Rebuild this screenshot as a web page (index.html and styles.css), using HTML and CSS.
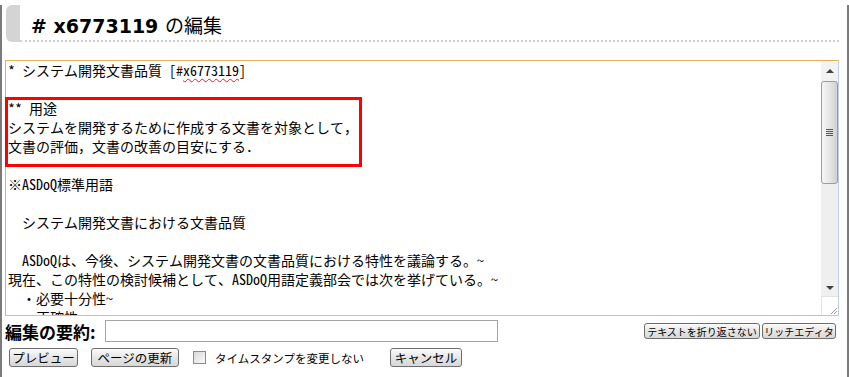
FILE: index.html
```html
<!DOCTYPE html>
<html>
<head>
    <title>x6773119 の編集</title>
    <link rel="stylesheet" href="styles.css">
</head>
<body>
    <div class="page">
        <h2 class="title">
            <span class="tab"></span>
            <span class="title-text"># x6773119 <span class="title-jp">の編集</span></span>
        </h2>

        <div class="editor">
            <div class="source">* システム開発文書品質 [#<span class="misspelled">x6773119</span>]

** 用途
システムを開発するために作成する文書を対象として，
文書の評価，文書の改善の目安にする．

※ASDoQ標準用語

  システム開発文書における文書品質

  ASDoQは、今後、システム開発文書の文書品質における特性を議論する。~
現在、この特性の検討候補として、ASDoQ用語定義部会では次を挙げている。~
  ・必要十分性~
  ・正確性~
  ・理解容易性~</div>
            <div class="scrollbar">
                <div class="sb-btn sb-up"><span class="arrow-up"></span></div>
                <div class="sb-thumb"><span class="grip"></span></div>
                <div class="sb-track"></div>
                <div class="sb-btn sb-down"><span class="arrow-down"></span></div>
                <div class="sb-corner">
                    <svg width="17" height="18" viewBox="0 0 17 18">
                        <path d="M15 10 L9 16 M15 13 L12 16" stroke="#9a9a9a" stroke-width="1"/>
                    </svg>
                </div>
            </div>
            <div class="highlight"></div>
        </div>

        <div class="summary-row">
            <label class="summary-label">編集の要約:</label>
            <input class="summary-input" type="text">
            <div class="tools">
                <button class="btn btn-small btn-wrap">テキストを折り返さない</button>
                <button class="btn btn-small btn-rich">リッチエディタ</button>
            </div>
        </div>

        <div class="action-row">
            <button class="btn btn-preview">プレビュー</button>
            <button class="btn btn-update">ページの更新</button>
            <span class="check"></span>
            <span class="check-label">タイムスタンプを変更しない</span>
            <button class="btn btn-cancel">キャンセル</button>
        </div>
    </div>
</body>
</html>
```

FILE: styles.css
```css
body {
    margin: 0;
    background: #fff;
    font-family: "Noto Sans CJK JP", sans-serif;
    color: #000;
}
.page {
    box-sizing: border-box;
    height: 377px;
    width: 849px;
    border-left: 2px solid #7a7a7a;
    border-right: 2px solid #7a7a7a;
    border-bottom: 2px solid #7a7a7a;
    padding: 0 8px 0 3px;
}
.title {
    display: flex;
    margin: 5px 0 0 1px;
    height: 37px;
    font-weight: normal;
    font-size: 19px;
}
.tab {
    width: 14px;
    height: 37px;
    background: #d4d4d4;
    border-radius: 6px 0 0 6px;
}
.title-text {
    flex: 1;
    box-sizing: border-box;
    padding: 4px 0 0 11px;
    line-height: 31px;
    border-bottom: 2px dotted #cfcfcf;
    font-family: "DejaVu Sans", Verdana, sans-serif;
    font-weight: bold;
    color: #000;
}
.title-jp {
    font-family: "Noto Sans CJK JP", sans-serif;
    font-weight: normal;
    font-size: 19px;
}
.editor {
    position: relative;
    display: flex;
    margin-top: 18px;
    height: 256px;
    box-sizing: border-box;
    border: 1px solid;
    border-color: #e2b35a #bccde6 #cbc3ab #d8b46c;
    background: #fff;
}
.source {
    flex: 1;
    overflow: hidden;
    white-space: pre;
    padding: 0 2px;
    font-family: "Noto Sans Mono CJK JP", "Noto Sans CJK JP", monospace;
    font-size: 14px;
    line-height: 19px;
}
.misspelled {
    text-decoration: underline wavy #e02020;
    text-decoration-thickness: 1px;
    text-underline-offset: 2px;
}
.highlight {
    position: absolute;
    left: -1px;
    top: 36px;
    width: 351px;
    height: 64px;
    border: 3px solid #ff0000;
}
.scrollbar {
    width: 17px;
    display: flex;
    flex-direction: column;
    background: #f0f0f0;
}
.sb-btn {
    display: flex;
    align-items: center;
    justify-content: center;
}
.sb-up {
    height: 20px;
    background: #f3f3f3;
}
.sb-down {
    height: 17px;
    background: #f0f0f0;
}
.arrow-up {
    border-left: 4px solid transparent;
    border-right: 4px solid transparent;
    border-bottom: 4px solid #404040;
}
.arrow-down {
    border-left: 4px solid transparent;
    border-right: 4px solid transparent;
    border-top: 4px solid #404040;
}
.sb-thumb {
    height: 103px;
    box-sizing: border-box;
    border: 1px solid #9c9c9c;
    border-radius: 3px;
    background: linear-gradient(to right, #f6f6f6, #e2e2e2 60%, #d0d0d0);
    display: flex;
    align-items: center;
    justify-content: center;
}
.grip {
    width: 7px;
    height: 7px;
    background: repeating-linear-gradient(to bottom, #555 0 1px, transparent 1px 2px);
}
.sb-track {
    flex: 1;
    background: #efefef;
}
.sb-corner {
    height: 18px;
    background: #fff;
    border-top: 1px solid #e2e2e2;
    border-left: 1px solid #e2e2e2;
}
.summary-row {
    display: flex;
    align-items: center;
    margin-top: 4px;
    height: 22px;
}
.summary-label {
    font-size: 17px;
    font-weight: bold;
    margin-right: 9px;
}
.summary-input {
    width: 393px;
    height: 22px;
    box-sizing: border-box;
    border: 1px solid #a5a5a5;
    margin: 0;
}
.tools {
    margin-left: auto;
    margin-right: 3px;
    display: flex;
    gap: 2px;
}
.btn {
    font-family: "Noto Sans CJK JP", sans-serif;
    font-size: 12.5px;
    line-height: 15px;
    height: 19px;
    padding: 0;
    border: 1px solid #6e6e6e;
    border-radius: 3px;
    background: linear-gradient(to bottom, #fbfbfb, #e6e6e6 50%, #d8d8d8);
    color: #000;
    margin: 0;
    text-align: center;
    white-space: nowrap;
}
.btn-small {
    font-size: 10px;
    height: 16px;
    line-height: 13px;
}
.btn-wrap {
    width: 116px;
}
.btn-rich {
    width: 74px;
}
.btn-preview {
    width: 69px;
}
.btn-update {
    width: 88px;
}
.btn-cancel {
    width: 72px;
    margin-left: 13px;
}
.action-row {
    display: flex;
    align-items: center;
    margin-top: 6px;
    padding-left: 4px;
    gap: 13px;
}
.check {
    width: 11px;
    height: 11px;
    border: 1px solid #8a8a8a;
    background: linear-gradient(135deg, #d8d8d8, #fafafa);
    margin-left: 1px;
}
.check-label {
    font-size: 11.5px;
    margin-left: -4px;
}
```
